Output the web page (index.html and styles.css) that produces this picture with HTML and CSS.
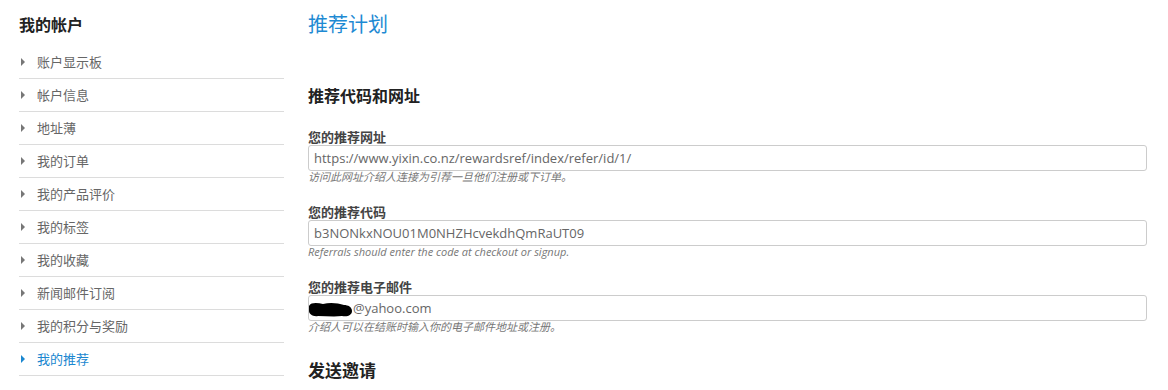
FILE: index.html
```html
<!DOCTYPE html>
<html lang="zh-CN">
<head>
  <meta charset="UTF-8">
  <title>推荐计划</title>
  <link rel="stylesheet" href="styles.css">
</head>
<body>
  <div class="page">
    <div class="sidebar">
      <div class="side-title">我的帐户</div>
      <ul class="side-nav">
        <li><a href="#">账户显示板</a></li>
        <li><a href="#">帐户信息</a></li>
        <li><a href="#">地址薄</a></li>
        <li><a href="#">我的订单</a></li>
        <li><a href="#">我的产品评价</a></li>
        <li><a href="#">我的标签</a></li>
        <li><a href="#">我的收藏</a></li>
        <li><a href="#">新闻邮件订阅</a></li>
        <li><a href="#">我的积分与奖励</a></li>
        <li class="current"><a href="#">我的推荐</a></li>
      </ul>
    </div>

    <div class="main">
      <h1>推荐计划</h1>
      <h2>推荐代码和网址</h2>

      <div class="field">
        <label>您的推荐网址</label>
        <div class="input">https://www.yixin.co.nz/rewardsref/index/refer/id/1/</div>
        <p class="hint">访问此网址介绍人连接为引荐一旦他们注册或下订单。</p>
      </div>

      <div class="field">
        <label>您的推荐代码</label>
        <div class="input">b3NONkxNOU01M0NHZHcvekdhQmRaUT09</div>
        <p class="hint">Referrals should enter the code at checkout or signup.</p>
      </div>

      <div class="field">
        <label>您的推荐电子邮件</label>
        <div class="input"><svg class="blot" width="45" height="17" viewBox="0 0 45 17"><path d="M1 5 C3 1 10 2 15 3 C22 1 30 2 36 4 C40 4 44 6 44 10 C44 14 40 16 34 15 C26 16 18 15 10 15 C5 16 1 13 1 10 Z" fill="#000"/></svg>@yahoo.com</div>
        <p class="hint">介绍人可以在结账时输入你的电子邮件地址或注册。</p>
      </div>

      <h2 class="send">发送邀请</h2>
    </div>
  </div>
</body>
</html>
```

FILE: styles.css
```css
body {
  margin: 0;
  background: #fff;
  font-family: "Open Sans", "Noto Sans CJK SC", sans-serif;
  color: #333;
}

.page {
  display: flex;
  padding: 0 21px 0 19px;
  gap: 24px;
}

.sidebar {
  width: 265px;
  flex-shrink: 0;
}

.side-title {
  font-size: 16px;
  font-weight: bold;
  color: #222;
  line-height: 20px;
  padding-top: 15px;
  margin-bottom: 11px;
}

.side-nav {
  list-style: none;
  margin: 0;
  padding: 0;
}

.side-nav li {
  height: 32px;
  border-bottom: 1px solid #dcdcdc;
  display: flex;
  align-items: center;
  padding-left: 2px;
}

.side-nav li::before {
  content: "";
  border-left: 4px solid #777;
  border-top: 4px solid transparent;
  border-bottom: 4px solid transparent;
  margin-right: 12px;
}

.side-nav a {
  font-size: 13px;
  color: #666;
  text-decoration: none;
  line-height: 16px;
}

.side-nav .current::before {
  border-left-color: #1a87d0;
}

.side-nav .current a {
  color: #1a87d0;
}

.main {
  flex: 1;
}

h1 {
  font-size: 20px;
  font-weight: normal;
  color: #1e8ad3;
  margin: 0;
  padding-top: 12px;
  line-height: 26px;
}

h2 {
  font-size: 16px;
  font-weight: bold;
  color: #222;
  margin: 48px 0 23px;
  line-height: 20px;
}

.field {
  margin-bottom: 21px;
}

.field label {
  display: block;
  font-size: 13px;
  font-weight: bold;
  color: #444;
  line-height: 16px;
}

.input {
  height: 24px;
  border: 1px solid #ccc;
  border-radius: 3px;
  font-size: 13px;
  color: #666;
  line-height: 24px;
  padding-left: 5px;
  display: flex;
  align-items: center;
}

.blot {
  margin-left: -6px;
  margin-top: 2px;
}

.hint {
  margin: 0;
  font-size: 11px;
  font-style: italic;
  color: #777;
  line-height: 12px;
}

h2.send {
  margin-top: 28px;
  font-size: 17px;
}
```
